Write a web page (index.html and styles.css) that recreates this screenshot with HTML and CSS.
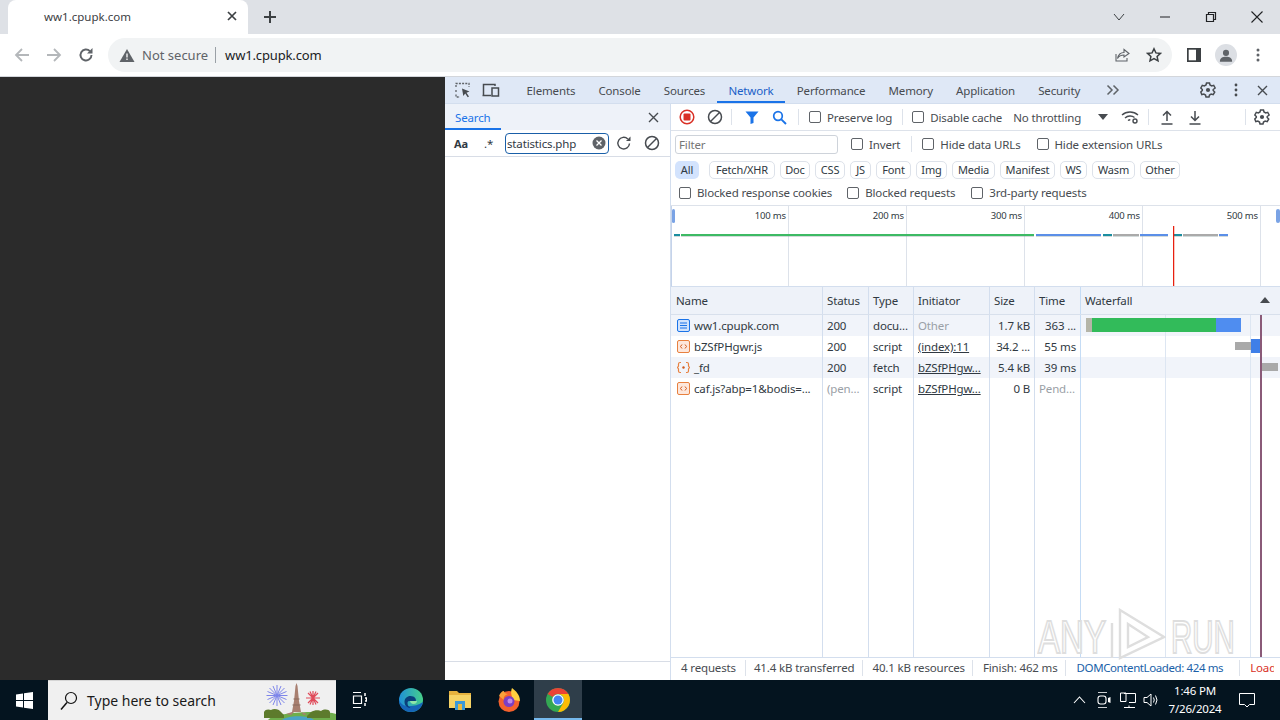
FILE: index.html
```html
<!DOCTYPE html>
<html lang="en">
<head>
<meta charset="utf-8">
<title>ww1.cpupk.com</title>
<link rel="stylesheet" href="styles.css">
</head>
<body>
<header class="tabstrip">
  <div class="tab">
    <span class="tab-title">ww1.cpupk.com</span>
    <svg class="tab-close" width="10" height="10" viewBox="0 0 10 10"><path d="M1 1l8 8M9 1l-8 8" stroke="#3c4043" stroke-width="1.7"/></svg>
  </div>
  <svg class="new-tab" width="14" height="14" viewBox="0 0 14 14"><path d="M7 1v12M1 7h12" stroke="#3c4043" stroke-width="2"/></svg>
  <div class="win-controls">
    <svg width="14" height="14" viewBox="0 0 14 14"><path d="M2 4l5 6 5-6" fill="none" stroke="#3c4043" stroke-width="1"/></svg>
    <svg width="14" height="14" viewBox="0 0 14 14"><path d="M2 7h10" stroke="#202124" stroke-width="1"/></svg>
    <svg width="14" height="14" viewBox="0 0 14 14"><path d="M2.500 4.500h7v7h-7zM4.500 4.500v-2h7v7h-2" fill="none" stroke="#202124" stroke-width="1.200"/></svg>
    <svg width="14" height="14" viewBox="0 0 14 14"><path d="M1.500 1.500l11 11M12.500 1.500l-11 11" stroke="#202124" stroke-width="1.100"/></svg>
  </div>
</header>
<nav class="toolbar">
  <svg class="nav-btn" width="16" height="16" viewBox="0 0 16 16"><path d="M15 8H2M8 2L2 8l6 6" fill="none" stroke="#b4b7ba" stroke-width="1.800"/></svg>
  <svg class="nav-btn" width="16" height="16" viewBox="0 0 16 16"><path d="M1 8h13M8 2l6 6-6 6" fill="none" stroke="#b4b7ba" stroke-width="1.800"/></svg>
  <svg class="nav-btn" width="16" height="16" viewBox="0 0 16 16"><path d="M13.500 8a5.500 5.500 0 1 1-1.600-3.900" fill="none" stroke="#5f6368" stroke-width="1.900"/><path d="M14.500 1v5.500H9z" fill="#5f6368"/></svg>
  <div class="omnibox">
    <svg width="16" height="15" viewBox="0 0 16 15"><path d="M8 1l7.500 13H.5z" fill="#5f6368"/><path d="M8 5.500v4M8 10.500v1.500" stroke="#fff" stroke-width="1.300"/></svg>
    <span class="not-secure">Not secure</span>
    <span class="omni-sep"></span>
    <span class="url">ww1.cpupk.com</span>
    <svg class="omni-share" width="18" height="18" viewBox="0 0 18 18"><path d="M3 8v7h11v-3" fill="none" stroke="#5f6368" stroke-width="1.100"/><path d="M4.500 12.500c1-4.500 4-6 6.500-6V3.500L16 7.500 11 11V9c-2.500 0-5 1-6.500 3.500z" fill="none" stroke="#5f6368" stroke-width="1.100"/></svg>
    <svg class="omni-star" width="16" height="16" viewBox="0 0 16 16"><path d="M8 1.800l1.900 4.100 4.500.5-3.300 3 .9 4.500L8 11.600l-4 2.300.9-4.500-3.300-3 4.500-.5z" fill="none" stroke="#3c4043" stroke-width="1.500"/></svg>
  </div>
  <div class="tool-right">
    <svg width="14" height="14" viewBox="0 0 14 14"><path d="M0 0h14v14H0z" fill="#3c4043"/><path d="M1.700 1.700h7.300v10.600H1.700z" fill="#fff"/></svg>
    <span class="avatar"><svg width="14" height="13" viewBox="0 0 16 14"><circle cx="8" cy="4" r="3.500" fill="#5f6368"/><path d="M1 14c0-4 3-5.500 7-5.500s7 1.500 7 5.500z" fill="#5f6368"/></svg></span>
    <svg width="4" height="14" viewBox="0 0 4 14"><circle cx="2" cy="2" r="1.500" fill="#5f6368"/><circle cx="2" cy="7" r="1.500" fill="#5f6368"/><circle cx="2" cy="12" r="1.500" fill="#5f6368"/></svg>
  </div>
</nav>
<main class="main">
  <section class="page"></section>
  <section class="devtools">
    <div class="dt-tabs">
      <svg class="dt-ico-a" width="16" height="16" viewBox="0 0 16 16"><path d="M1 5V1.500h13V5M1 8v2M1 12.500V15h4" fill="none" stroke="#5f6368" stroke-width="1.300" stroke-dasharray="2 1.200"/><path d="M7 6.500l7.500 3-3 1.300 2.500 3.700-1.300.8-2.500-3.700L8.300 14z" fill="#474b50"/></svg>
      <svg class="dt-ico-b" width="18" height="16" viewBox="0 0 18 16"><path d="M1.500 13V2.500H13V4M.5 13.500H9" fill="none" stroke="#474b50" stroke-width="1.500"/><path d="M10 6h6.500v8H10z" fill="none" stroke="#474b50" stroke-width="1.500"/></svg>
      <span class="dt-tab">Elements</span>
      <span class="dt-tab">Console</span>
      <span class="dt-tab">Sources</span>
      <span class="dt-tab is-active">Network</span>
      <span class="dt-tab">Performance</span>
      <span class="dt-tab">Memory</span>
      <span class="dt-tab">Application</span>
      <span class="dt-tab">Security</span>
      <svg class="dt-more" width="14" height="12" viewBox="0 0 14 12"><path d="M1.500 1.500L6 6l-4.500 4.500M7.500 1.500L12 6l-4.500 4.500" fill="none" stroke="#5f6368" stroke-width="1.500"/></svg>
      <div class="dt-tabs-right">
        <svg width="16" height="16" viewBox="0 0 16 16"><path class="gear" d="M6.500 1h3l.5 2 1.700 1 2-.6 1.500 2.600L13.200 7.500v1l1.500 1.500-1.500 2.600-2-.6-1.700 1-.5 2h-3l-.5-2-1.700-1-2 .6L.8 10l1.500-1.500v-1L.8 6l1.500-2.600 2 .6L6 3z"/><circle cx="8" cy="8" r="2.100" fill="#474b50"/></svg>
        <svg width="4" height="14" viewBox="0 0 4 14"><circle cx="2" cy="2" r="1.400" fill="#474b50"/><circle cx="2" cy="7" r="1.400" fill="#474b50"/><circle cx="2" cy="12" r="1.400" fill="#474b50"/></svg>
        <svg width="11" height="11" viewBox="0 0 11 11"><path d="M1 1l9 9M10 1l-9 9" stroke="#474b50" stroke-width="1.400"/></svg>
      </div>
    </div>
    <div class="dt-body">
      <aside class="search-panel">
        <div class="search-head">
          <span class="search-title">Search</span>
          <svg width="11" height="11" viewBox="0 0 11 11"><path d="M1 1l9 9M10 1l-9 9" stroke="#474b50" stroke-width="1.400"/></svg>
        </div>
        <div class="search-row">
          <span class="opt-aa">Aa</span>
          <span class="opt-re">.*</span>
          <div class="search-input">
            <span>statistics.php</span>
            <svg width="14" height="14" viewBox="0 0 14 14"><circle cx="7" cy="7" r="6.500" fill="#5f6368"/><path d="M4.500 4.500l5 5M9.500 4.500l-5 5" stroke="#fff" stroke-width="1.300"/></svg>
          </div>
          <svg class="opt-refresh" width="16" height="16" viewBox="0 0 16 16"><path d="M13.500 8.500a5.800 5.800 0 1 1-1.700-4.500" fill="none" stroke="#474b50" stroke-width="1.400"/><path d="M14.500 1.500v4.500H10z" fill="#474b50"/></svg>
          <svg class="opt-block" width="16" height="16" viewBox="0 0 16 16"><circle cx="8" cy="8" r="6.500" fill="none" stroke="#474b50" stroke-width="1.500"/><path d="M3.500 12.500l9-9" stroke="#474b50" stroke-width="1.500"/></svg>
        </div>
        <div class="search-results"></div>
        <div class="search-foot"></div>
      </aside>
      <section class="network">
        <div class="net-toolbar">
          <svg class="ntb-record" width="16" height="16" viewBox="0 0 16 16"><circle cx="8" cy="8" r="6.800" fill="none" stroke="#d93025" stroke-width="1.500"/><rect x="4.500" y="4.500" width="7" height="7" rx="1" fill="#d93025"/></svg>
          <svg class="ntb-clear" width="16" height="16" viewBox="0 0 16 16"><circle cx="8" cy="8" r="6.500" fill="none" stroke="#474b50" stroke-width="1.500"/><path d="M3.500 12.500l9-9" stroke="#474b50" stroke-width="1.500"/></svg>
          <span class="vsep vsep-a"></span>
          <svg class="ntb-filter" width="14" height="13" viewBox="0 0 14 13"><path d="M.5 .5h13L8.500 6.500V12l-3 1V6.500z" fill="#1a73e8"/></svg>
          <svg class="ntb-search" width="15" height="15" viewBox="0 0 15 15"><circle cx="6" cy="6" r="4.300" fill="none" stroke="#1a73e8" stroke-width="1.700"/><path d="M9.300 9.300l4.700 4.700" stroke="#1a73e8" stroke-width="1.900"/></svg>
          <span class="vsep vsep-b"></span>
          <label class="check ntb-preserve"><span class="box"></span>Preserve log</label>
          <span class="vsep vsep-c"></span>
          <label class="check ntb-disable"><span class="box"></span>Disable cache</label>
          <span class="ntb-throttle">No throttling</span>
          <span class="ntb-arrow"></span>
          <svg class="ntb-wifi" width="18" height="14" viewBox="0 0 18 14"><path d="M1 5c4.500-4 11.500-4 16 0M4 8c2.800-2.500 7-2.500 9.500-.5M7 10.500c.7-.5 1.500-.8 2.300-.8" fill="none" stroke="#474b50" stroke-width="1.400"/><circle cx="14" cy="11" r="2" fill="none" stroke="#474b50" stroke-width="1.400"/></svg>
          <span class="vsep vsep-d"></span>
          <svg class="ntb-up" width="14" height="15" viewBox="0 0 14 15"><path d="M7 11V2M3 5.500L7 1.500l4 4M1.500 14h11" fill="none" stroke="#474b50" stroke-width="1.500"/></svg>
          <svg class="ntb-down" width="14" height="15" viewBox="0 0 14 15"><path d="M7 1v9M3 6.500l4 4 4-4M1.500 14h11" fill="none" stroke="#474b50" stroke-width="1.500"/></svg>
          <span class="vsep vsep-e"></span>
          <svg class="ntb-gear" width="16" height="16" viewBox="0 0 16 16"><path class="gear" d="M6.500 1h3l.5 2 1.700 1 2-.6 1.500 2.600L13.200 7.500v1l1.500 1.500-1.500 2.600-2-.6-1.700 1-.5 2h-3l-.5-2-1.700-1-2 .6L.8 10l1.500-1.500v-1L.8 6l1.500-2.600 2 .6L6 3z"/><circle cx="8" cy="8" r="2.100" fill="#474b50"/></svg>
        </div>
        <div class="net-filter">
          <span class="filter-input">Filter</span>
          <label class="check f-invert"><span class="box"></span>Invert</label>
          <span class="vsep f-sep"></span>
          <label class="check f-data"><span class="box"></span>Hide data URLs</label>
          <label class="check f-ext"><span class="box"></span>Hide extension URLs</label>
        </div>
        <div class="chips">
          <span class="chip chip-on">All</span>
          <span class="chip">Fetch/XHR</span>
          <span class="chip">Doc</span>
          <span class="chip">CSS</span>
          <span class="chip">JS</span>
          <span class="chip">Font</span>
          <span class="chip">Img</span>
          <span class="chip">Media</span>
          <span class="chip">Manifest</span>
          <span class="chip">WS</span>
          <span class="chip">Wasm</span>
          <span class="chip">Other</span>
        </div>
        <div class="net-blocked">
          <label class="check b-a"><span class="box"></span>Blocked response cookies</label>
          <label class="check b-b"><span class="box"></span>Blocked requests</label>
          <label class="check b-c"><span class="box"></span>3rd-party requests</label>
        </div>
        <div class="overview">
          <div class="ov-col"><span>100 ms</span></div>
          <div class="ov-col"><span>200 ms</span></div>
          <div class="ov-col"><span>300 ms</span></div>
          <div class="ov-col"><span>400 ms</span></div>
          <div class="ov-col"><span>500 ms</span></div>
          <i class="ov-bar teal" style="left:2px;width:6px"></i>
          <i class="ov-bar green" style="left:9px;width:353px"></i>
          <i class="ov-bar blue" style="left:364px;width:65px"></i>
          <i class="ov-bar teal" style="left:431px;width:9px"></i>
          <i class="ov-bar gray" style="left:441px;width:26px"></i>
          <i class="ov-bar blue" style="left:468px;width:28px"></i>
          <i class="ov-bar teal" style="left:501px;width:9px"></i>
          <i class="ov-bar gray" style="left:511px;width:35px"></i>
          <i class="ov-bar blue" style="left:547px;width:9px"></i>
          <i class="ov-load"></i>
          <i class="ov-handle ov-handle-l"></i>
          <i class="ov-handle ov-handle-r"></i>
        </div>
        <div class="table">
          <div class="row head">
            <div class="c c-name">Name</div><div class="c c-st">Status</div><div class="c c-ty">Type</div><div class="c c-in">Initiator</div><div class="c c-sz">Size</div><div class="c c-tm">Time</div>
            <div class="c c-wf">Waterfall<span class="sort-up"></span></div>
          </div>
          <div class="row alt">
            <div class="c c-name"><svg class="file" width="13" height="13" viewBox="0 0 13 13"><rect x=".5" y=".5" width="12" height="12" rx="1.500" fill="#d2e3fc" stroke="#1a73e8"/><path d="M3 4h7M3 6.500h7M3 9h7" stroke="#1a73e8"/></svg>ww1.cpupk.com</div>
            <div class="c c-st">200</div><div class="c c-ty">docu...</div><div class="c c-in muted">Other</div><div class="c c-sz num">1.7 kB</div><div class="c c-tm num">363 ...</div>
            <div class="c c-wf"><i class="wf gray-l" style="left:5px;width:6px"></i><i class="wf w-green" style="left:11px;width:124px"></i><i class="wf w-blue" style="left:135px;width:25px"></i></div>
          </div>
          <div class="row">
            <div class="c c-name"><svg class="file" width="13" height="13" viewBox="0 0 13 13"><rect x=".5" y=".5" width="12" height="12" rx="1.500" fill="#fde7dc" stroke="#e8803f"/><path d="M5 4.500L3.500 6.500 5 8.500M8 4.500l1.500 2L8 8.500" fill="none" stroke="#d0591c"/></svg>bZSfPHgwr.js</div>
            <div class="c c-st">200</div><div class="c c-ty">script</div><div class="c c-in"><u>(index):11</u></div><div class="c c-sz num">34.2 ...</div><div class="c c-tm num">55 ms</div>
            <div class="c c-wf"><i class="wf gray-m" style="left:154px;width:16px"></i><i class="wf w-blue2" style="left:170px;width:10px"></i></div>
          </div>
          <div class="row alt">
            <div class="c c-name"><svg class="file" width="13" height="13" viewBox="0 0 13 13"><path d="M4 1.500H3Q1.500 1.500 1.500 3v2L.5 6.500l1 1.500v2q0 1.500 1.500 1.500h1M9 1.500h1q1.500 0 1.500 1.500v2l1 1.500-1 1.500v2q0 1.500-1.500 1.500H9" fill="none" stroke="#e8803f" stroke-width="1.200"/><circle cx="6.500" cy="6.500" r="1.200" fill="#d0591c"/></svg>_fd</div>
            <div class="c c-st">200</div><div class="c c-ty">fetch</div><div class="c c-in"><u>bZSfPHgw...</u></div><div class="c c-sz num">5.4 kB</div><div class="c c-tm num">39 ms</div>
            <div class="c c-wf"><i class="wf gray-m" style="left:181px;width:16px"></i></div>
          </div>
          <div class="row">
            <div class="c c-name"><svg class="file" width="13" height="13" viewBox="0 0 13 13"><rect x=".5" y=".5" width="12" height="12" rx="1.500" fill="#fde7dc" stroke="#e8803f"/><path d="M5 4.500L3.500 6.500 5 8.500M8 4.500l1.500 2L8 8.500" fill="none" stroke="#d0591c"/></svg>caf.js?abp=1&amp;bodis=...</div>
            <div class="c c-st muted">(pen...</div><div class="c c-ty">script</div><div class="c c-in"><u>bZSfPHgw...</u></div><div class="c c-sz num">0 B</div><div class="c c-tm muted">Pend...</div>
            <div class="c c-wf"></div>
          </div>
          <div class="row filler">
            <div class="c c-name"></div><div class="c c-st"></div><div class="c c-ty"></div><div class="c c-in"></div><div class="c c-sz"></div><div class="c c-tm"></div><div class="c c-wf"></div>
          </div>
          <i class="wf-grid wf-grid-a"></i>
          <i class="wf-grid wf-grid-b"></i>
          <i class="wf-load"></i>
        </div>
        <div class="status">
          <span class="st">4 requests</span>
          <span class="st">41.4 kB transferred</span>
          <span class="st">40.1 kB resources</span>
          <span class="st">Finish: 462 ms</span>
          <span class="st st-blue">DOMContentLoaded: 424 ms</span>
          <span class="st st-red">Load: 462 ms</span>
        </div>
        <div class="watermark">
          <span class="wm-text wm-any">ANY</span>
          <svg class="wm-icon" width="56" height="52" viewBox="0 0 56 52"><path d="M2 15v35M10 2l44 27-44 21zM18 16l20 13-20 10z" fill="#fff" fill-opacity=".55" stroke="#dedede" stroke-width="2.400"/></svg>
          <span class="wm-text wm-run">RUN</span>
        </div>
      </section>
    </div>
  </section>
</main>
<footer class="taskbar">
  <svg class="tb-start" width="17" height="17" viewBox="0 0 17 17"><path d="M0 2.500l7-1V8H0zM8 1.300L17 0v8H8zM0 9h7v6.500l-7-1zM8 9h9v8l-9-1.300z" fill="#fff"/></svg>
  <div class="tb-search">
    <svg width="18" height="20" viewBox="0 0 18 20"><circle cx="11" cy="7" r="5.500" fill="none" stroke="#111" stroke-width="1.200"/><path d="M7 11.500L1 18.500" stroke="#111" stroke-width="1.500"/></svg>
    <span class="tb-search-text">Type here to search</span>
    <svg class="tb-eiffel" width="74" height="39" viewBox="0 0 74 39">
      <path d="M6 39c6-8 56-10 68-6v6z" fill="#6fae4c"/>
      <path d="M20 39c6-5 26-5 32 0z" fill="#4aa3c7"/>
      <path d="M24 33l6-2 2-11 1.500-15 1-3 1 3L37 20l2 11 6 2-3 1-3-3h-7l-3 3z" fill="#a87f70"/>
      <path d="M30.500 24h8M31.500 18h6" stroke="#8a6a5c" stroke-width="1"/>
      <path d="M2 37v-6c1-3 5-3 7-2 3-2 8-1 10 2l3 3v3zM45 35l4-4c3-2 8-2 10-1 3-2 8-2 9 1v6H45z" fill="#5d7b2c"/>
      <g stroke="#7d85ea" stroke-width="1"><path d="M15 4v21M4.500 14.500h21M7.500 7l15 15M22.500 7l-15 15M11 5l8 19M19 5l-8 19M5.500 10.500l19 8M24.500 10.500l-19 8"/></g>
      <g stroke="#e04a5a" stroke-width="1.200"><path d="M51 10v14M44 17h14M46 12l10 10M56 12L46 22M48 10.500l6 13M54 10.500l-6 13"/></g>
    </svg>
  </div>
  <svg class="tb-task" width="15" height="16" viewBox="0 0 15 16"><path d="M1 .5h8M1 15.500h8M1.500 4h8v7.500h-8z" fill="none" stroke="#fff" stroke-width="1.200"/><path d="M13 1v3M13 6h1.500v3H13M13 11v3" stroke="#fff" stroke-width="1.500"/></svg>
  <svg class="tb-edge" width="24" height="24" viewBox="0 0 24 24"><defs><linearGradient id="eg" x1="0" y1="0" x2="1" y2="0"><stop offset="0" stop-color="#1f8fd8"/><stop offset="1" stop-color="#46d08a"/></linearGradient></defs><circle cx="12" cy="12" r="12" fill="url(#eg)"/><path d="M24 14c-.8 6-6 10-12 10C5 24 0 19 0 12c2 5 6 6 10 6 6 0 9-1 14-4z" fill="#1565b8"/><path d="M16.500 14c1.500-3-1-6-5-6-3.500 0-6 2.500-6 6 0 3.500 3 6 6 6-2-1-3-3-3-5 0-1.500 1-2 2-2z" fill="#0a3f7c"/><path d="M11 13h7c0 1.500-1 3-3.500 3-2 0-3.500-1.500-3.500-3z" fill="#8fe6a8"/></svg>
  <svg class="tb-folder" width="22" height="20" viewBox="0 0 22 20"><path d="M0 1h8l2 2h12v4H0z" fill="#e6b23e"/><path d="M0 5h22v13H0z" fill="#f6d365"/><path d="M6 11h10v9H6z" fill="#3b9ad9"/><path d="M9 14h4v6H9z" fill="#e8b93f"/></svg>
  <svg class="tb-fox" width="24" height="24" viewBox="0 0 24 24"><circle cx="12" cy="13.500" r="10.500" fill="#f4612c"/><path d="M15 0c4 3 8 7 8 13l-7-1C15 8 13 5 15 0z" fill="#ffcf3f"/><path d="M2 8c1-3 3-5 5-5 0 2 2 3 4 3-3 1-5 3-4 6z" fill="#f9a13a"/><circle cx="12" cy="13.500" r="5.500" fill="#7b3fc4"/><circle cx="13" cy="13" r="2.500" fill="#c08ae8"/></svg>
  <div class="tb-chrome">
    <svg width="24" height="24" viewBox="0 0 24 24"><circle cx="12" cy="12" r="12" fill="#34a853"/><path d="M12 0A12 12 0 0 1 22.390 6H12A6 6 0 0 0 6.800 9L1.610 6A12 12 0 0 1 12 0z" fill="#ea4335"/><path d="M22.390 6A12 12 0 0 1 12 24L17.200 15A6 6 0 0 0 12 6z" fill="#fbbc05"/><circle cx="12" cy="12" r="5.800" fill="#fff"/><circle cx="12" cy="12" r="4.500" fill="#4285f4"/></svg>
  </div>
  <div class="tray">
    <svg class="tr-up" width="13" height="8" viewBox="0 0 13 8"><path d="M1 7l5.500-6L12 7" fill="none" stroke="#fff" stroke-width="1.100"/></svg>
    <svg class="tr-meet" width="14" height="18" viewBox="0 0 14 18"><path d="M1 1.500h9M1 16.500h9" stroke="#fff" stroke-width=".8"/><rect x="1" y="5" width="8" height="8" rx="2.500" fill="none" stroke="#fff" stroke-width="1.100"/><path d="M11 7v4l2.500 1V6z" fill="#fff"/></svg>
    <svg class="tr-net" width="16" height="16" viewBox="0 0 16 16"><path d="M4 1.500h11.500v9H9M.5 1h5.500v8.500H.5zM9 13.500v2M4 15.500h11" fill="none" stroke="#fff" stroke-width="1"/></svg>
    <svg class="tr-vol" width="16" height="16" viewBox="0 0 16 16"><path d="M1 5.500h3L8 2v12L4 10.500H1z" fill="none" stroke="#fff" stroke-width="1"/><path d="M10.500 5.500q1.500 2.500 0 5M12.500 3.500q3 4.500 0 9" fill="none" stroke="#fff" stroke-width="1"/></svg>
    <div class="clock"><span>1:46 PM</span><span>7/26/2024</span></div>
    <svg class="tr-notify" width="16" height="16" viewBox="0 0 16 16"><path d="M.5 1.500h15v11h-5L8 15l-2.500-2.500h-5z" fill="none" stroke="#fff" stroke-width="1"/></svg>
  </div>
</footer>
</body>
</html>
```

FILE: styles.css
```css
* { box-sizing: border-box; }
html, body { margin: 0; width: 1280px; height: 720px; overflow: hidden; }
body { display: flex; flex-direction: column; font-family: "Noto Sans", "Open Sans", sans-serif; font-size: 11.5px; letter-spacing: -.15px; color: #303942; }
i { display: block; }
svg { flex: none; display: block; }

.tabstrip { height: 34px; background: #dee1e6; display: flex; align-items: center; padding-left: 8px; flex: none; }
.tab { width: 240px; height: 34px; background: #fff; border-radius: 8px 8px 0 0; display: flex; align-items: center; padding: 0 11px 2px 36px; justify-content: space-between; font-size: 11.5px; letter-spacing: 0; color: #3c4043; }
.new-tab { margin-left: 15px; }
.win-controls { margin-left: auto; display: flex; align-items: center; gap: 32px; padding-right: 16px; }

.toolbar { height: 43px; background: #fff; display: flex; align-items: center; flex: none; padding-left: 14px; border-bottom: 1px solid #d3d6db; }
.nav-btn { margin-right: 16px; }
.nav-btn:nth-child(3) { margin-right: 14px; }
.omnibox { width: 1064px; height: 34px; border-radius: 17px; background: #f1f3f4; display: flex; align-items: center; padding-left: 11px; font-size: 13px; letter-spacing: 0; }
.not-secure { margin-left: 7px; color: #5f6368; }
.omni-sep { width: 1px; height: 16px; background: #9aa0a6; margin: 0 9px 0 7px; }
.url { color: #202124; letter-spacing: -.15px; }
.omni-share { margin-left: auto; }
.omni-star { margin: 0 10px 0 15px; }
.tool-right { display: flex; align-items: center; margin-left: 15px; }
.avatar { width: 22px; height: 22px; border-radius: 50%; background: #dcdfe4; display: flex; align-items: center; justify-content: center; margin: 0 19px 0 14px; }

.main { flex: 1; min-height: 0; display: flex; }
.page { width: 445px; background: #2b2b2b; flex: none; }
.devtools { flex: 1; display: flex; flex-direction: column; background: #fff; min-width: 0; }

.dt-tabs { height: 27px; background: #dfe8f6; display: flex; align-items: center; flex: none; padding-left: 10px; border-bottom: 1px solid #d3deee; color: #474b50; }
.dt-ico-b { margin-left: 11px; margin-right: 15px; }
.dt-tab { height: 26px; padding: 0 11.600px; display: flex; align-items: center; }
.dt-tab.is-active { color: #1a5fc8; box-shadow: inset 0 -2px 0 #1a73e8; }
.dt-more { margin-left: 14px; }
.dt-tabs-right { margin-left: auto; display: flex; align-items: center; gap: 18px; padding-right: 12px; }
.dt-tabs-right svg:nth-child(2) { margin-right: 1px; }
.gear { fill: none; stroke: #474b50; stroke-width: 1.500; }

.dt-body { flex: 1; display: flex; min-height: 0; }
.search-panel { width: 226px; flex: none; display: flex; flex-direction: column; border-right: 1px solid #d3deee; }
.search-head { height: 26px; background: #eef2f9; display: flex; align-items: center; justify-content: space-between; padding-right: 11px; }
.search-title { height: 26px; width: 56px; padding-left: 10px; display: flex; align-items: center; color: #1a73e8; box-shadow: inset 0 -2px 0 #1a73e8; }
.search-row { height: 27px; display: flex; align-items: center; border-bottom: 1px solid #d8dde6; padding-left: 9px; }
.opt-aa { font-weight: 700; font-size: 11px; width: 30px; }
.opt-re { width: 21px; }
.search-input { width: 104px; height: 21px; border: 1px solid #1a5fa8; border-radius: 4px; padding: 0 2px 0 1px; display: flex; align-items: center; justify-content: space-between; }
.opt-refresh { margin-left: 7px; }
.opt-block { margin-left: 12px; }
.search-results { flex: 1; }
.search-foot { height: 19px; border-top: 1px solid #d8dde6; }

.network { flex: 1; min-width: 0; display: flex; flex-direction: column; position: relative; }
.net-toolbar { height: 27px; display: flex; align-items: center; border-bottom: 1px solid #dde2ea; position: relative; }
.ntb-record { margin-left: 8px; }
.ntb-clear { margin-left: 12px; }
.vsep { width: 1px; height: 16px; background: #dde2ea; flex: none; }
.vsep-a { margin-left: 8px; }
.ntb-filter { margin-left: 13px; }
.ntb-search { margin-left: 13px; }
.vsep-b { margin-left: 11px; }
.check { display: flex; align-items: center; color: #474b50; white-space: nowrap; }
.box { width: 12px; height: 12px; border: 1px solid #5f6368; border-radius: 2px; margin-right: 6px; background: #fff; flex: none; }
.ntb-preserve { margin-left: 10px; }
.vsep-c { margin-left: 10px; }
.ntb-disable { margin-left: 9px; }
.ntb-throttle { margin-left: 11px; color: #474b50; }
.ntb-arrow { width: 0; height: 0; border: 5px solid transparent; border-top: 6px solid #474b50; border-bottom: 0; margin-left: 17px; }
.ntb-wifi { margin-left: 13px; }
.vsep-d { margin-left: 9px; }
.ntb-up { margin-left: 11px; }
.ntb-down { margin-left: 14px; }
.vsep-e { margin-left: 43px; }
.ntb-gear { margin-left: 8px; }

.net-filter { height: 26px; display: flex; align-items: center; padding-left: 4px; }
.filter-input { width: 163px; height: 19px; border: 1px solid #ced3da; border-radius: 3px; padding-left: 3px; line-height: 18px; color: #757575; }
.f-invert { margin-left: 13px; }
.f-sep { margin-left: 11px; }
.f-data { margin-left: 10px; }
.f-ext { margin-left: 16px; }

.chips { height: 24px; display: grid; grid-template-columns: 24px 66px 30px 30px 21px 35px 31px 43px 55px 27px 43px 40px; grid-template-rows: 18px; align-content: center; padding: 2px 0 0 4px; column-gap: 5px; }
.chip { height: 18px; line-height: 16px; text-align: center; border: 1px solid #dde2ea; border-radius: 5px; color: #303942; font-size: 11px; }
.chip-on { border-color: transparent; background: #d3e3fd; margin-right: 0; }
.chip:nth-child(2) { margin-left: 5px; margin-right: -5px; }
.chip:nth-child(n+3) { transform: translateX(5px); }

.net-blocked { height: 25px; display: flex; align-items: center; padding: 0 0 1px 8px; border-bottom: 1px solid #dde2ea; }
.b-b { margin-left: 15px; }
.b-c { margin-left: 16px; }

.overview { height: 81px; display: flex; position: relative; border-bottom: 1px solid #d3deee; border-left: 1px solid #c5d3ea; font-size: 9.500px; flex: none; }
.ov-col { width: 118px; border-right: 1px solid #dde2ea; text-align: right; padding: 3px 2px 0 0; color: #303942; }
.ov-col:first-child { width: 117px; }
.ov-bar { position: absolute; top: 28px; height: 2px; box-shadow: 0 1px 0 rgba(130, 150, 150, .35); }
.teal { background: #1b8ea0; }
.green { background: #3dba64; }
.blue { background: #5b8fe8; }
.gray { background: #aaa; }
.ov-load { position: absolute; left: 501px; top: 20px; bottom: 0; width: 1px; background: #e8200f; box-shadow: 1px 0 0 rgba(232, 32, 15, .25); z-index: 1; }
.ov-handle { position: absolute; top: 3px; width: 3px; height: 14px; background: #7aa3e5; border-radius: 2px; }
.ov-handle-l { left: 0; }
.ov-handle-r { right: 0; width: 4px; }

.table { flex: 1; min-height: 0; display: flex; flex-direction: column; position: relative; }
.row { display: flex; height: 21px; flex: none; }
.row.head { height: 28px; background: #eef2f9; border-bottom: 1px solid #d8e0ec; }
.row.alt { background: #f1f4fa; }
.row.filler { flex: 1; }
.c { border-right: 1px solid #d3deee; padding: 0 4px; display: flex; align-items: center; white-space: nowrap; overflow: hidden; color: #303942; }
.c-name { width: 152px; padding-left: 5px; }
.c-st { width: 46px; }
.c-ty { width: 45px; }
.c-in { width: 76px; }
.c-sz { width: 45px; }
.c-tm { width: 46px; border-right-color: #c5dcf5; }
.c-wf { flex: 1; border-right: 0; position: relative; }
.num { justify-content: flex-end; }
.muted { color: #9aa0a6; }
.file { margin-right: 4px; margin-left: 1px; }
.sort-up { position: absolute; right: 10px; top: 10px; border: 5px solid transparent; border-bottom: 6px solid #474b50; border-top: 0; }
.wf { position: absolute; top: 3px; height: 14px; z-index: 1; }
.w-green { background: #32bb5a; }
.w-blue { background: #4f8df0; }
.w-blue2 { background: #3f7fe8; }
.gray-l { background: #b5b5a8; width: 6px; }
.gray-m { background: #a9a9a9; top: 6px; height: 8px; }
.wf-grid { position: absolute; top: 28px; bottom: 0; width: 1px; background: #dde6f2; }
.wf-grid-a { left: 494px; }
.wf-grid-b { left: 579px; }
.wf-load { position: absolute; top: 28px; bottom: 0; left: 589px; width: 2px; background: #8a5a78; z-index: 2; }

.status { height: 23px; display: flex; align-items: center; border-top: 1px solid #d3deee; flex: none; overflow: hidden; white-space: nowrap; background: #fff; padding-bottom: 2px; }
.st { padding: 0 7px 0 10px; border-right: 1px solid #dde2ea; height: 16px; line-height: 16px; color: #474b50; }
.st:first-child { padding-right: 9px; }
.st:nth-child(2) { padding-left: 8px; }
.st-blue { color: #1a5fa8; padding: 0 16px 0 11px; letter-spacing: -.4px; }
.st-red { color: #d93025; border: 0; padding-right: 0; width: 34px; overflow: hidden; flex: none; }

.watermark { position: absolute; left: 367px; bottom: 20px; height: 52px; display: flex; align-items: flex-end; pointer-events: none; }
.wm-text { display: block; height: 46px; font-family: "Liberation Sans", sans-serif; font-size: 46px; line-height: 46px; letter-spacing: 0; color: rgba(255, 255, 255, .5); -webkit-text-stroke: 2px #dedede; transform-origin: left bottom; white-space: nowrap; }
.wm-any { width: 67px; transform: scaleX(.72); }
.wm-run { width: 62px; margin-left: 5px; transform: scaleX(.64); }
.wm-icon { margin-left: 5px; }

.taskbar { height: 40px; background: #04141f; display: flex; align-items: center; padding-left: 16px; flex: none; color: #fff; }
.tb-search { margin-left: 15px; width: 288px; height: 40px; background: #f0f0f0; display: flex; align-items: center; padding-left: 12px; position: relative; overflow: hidden; border-top: 1px solid #d5d5d5; }
.tb-search-text { margin-left: 9px; color: #1a1a1a; font-size: 14px; letter-spacing: 0; }
.tb-eiffel { margin-left: auto; }
.tb-task { margin-left: 16px; }
.tb-edge { margin-left: 32px; }
.tb-folder { margin-left: 26px; }
.tb-fox { margin-left: 26px; }
.tb-chrome { margin-left: 13px; width: 48px; height: 40px; background: #2f3e4a; display: flex; align-items: center; justify-content: center; box-shadow: inset 0 -2px 0 #76b9ed; }
.tray { margin-left: auto; display: flex; align-items: center; padding-right: 25px; }
.tr-meet { margin-left: 11px; }
.tr-net { margin-left: 9px; }
.tr-vol { margin-left: 7px; }
.clock { display: flex; flex-direction: column; align-items: center; margin-left: 11px; width: 50px; font-size: 11.500px; letter-spacing: -.2px; line-height: 18px; }
.tr-notify { margin-left: 19px; }
```
